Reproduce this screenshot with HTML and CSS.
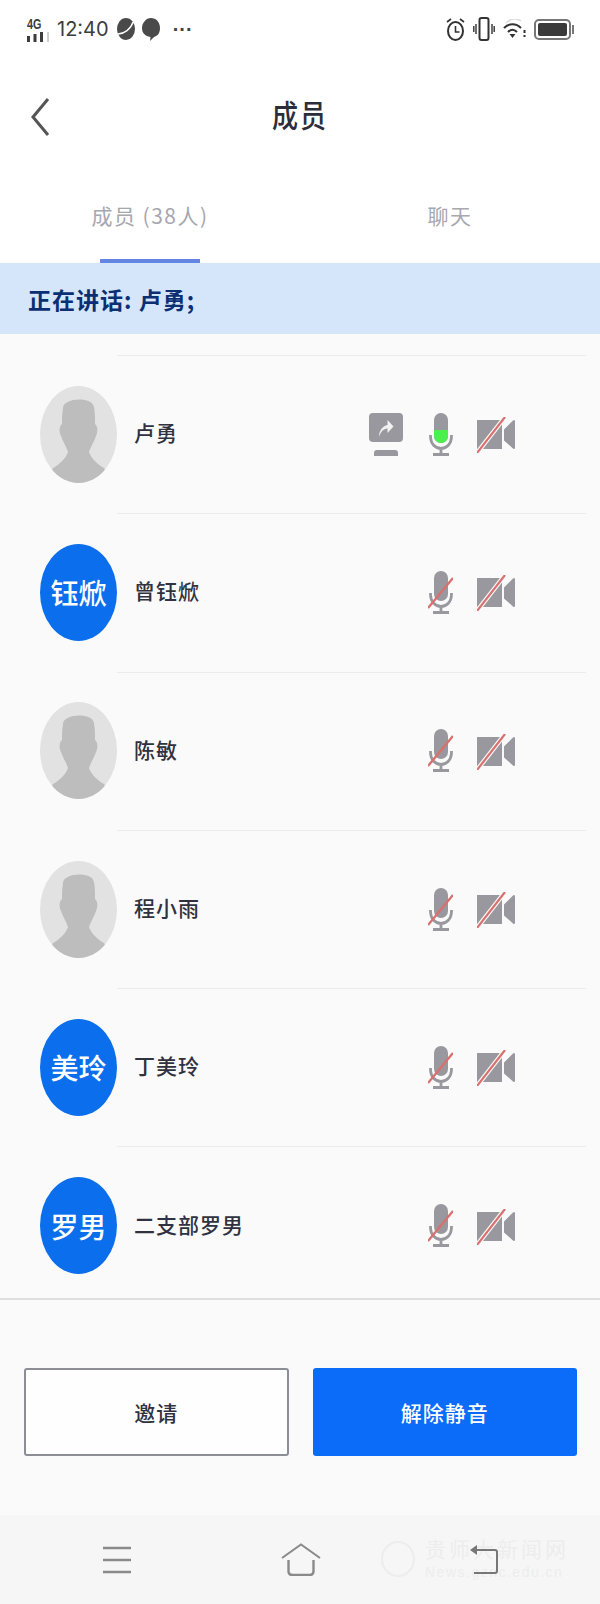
FILE: index.html
```html
<!DOCTYPE html>
<html lang="zh">
<head>
  <meta charset="UTF-8" />
  <meta name="viewport" content="width=device-width, initial-scale=1" />
  <title>成员</title>
  <link rel="stylesheet" href="styles.css">
</head>
<body>
  <svg class="defs" width="0" height="0">
    <symbol id="person" viewBox="0 0 77 97">
      <ellipse cx="38.500" cy="48.500" rx="38.500" ry="48.500" fill="#e2e2e2"/>
      <clipPath id="oval"><ellipse cx="38.500" cy="48.500" rx="38.500" ry="48.500"/></clipPath>
      <path clip-path="url(#oval)" fill="#bdbdbd" d="M23 22C23 12 52 10 54 21 55 27 55 32 55 38 58 40 58 46 56 50 54 56 51 60 49 66 51 72 57 78 64 82L71 97H6L13 82C20 78 26 72 28 66 26 60 23 56 21 50 19 46 19 40 22 38 22 32 22 28 23 22z"/>
    </symbol>
    <symbol id="mic" viewBox="0 0 24 43">
      <rect x="5" y="0" width="14" height="30" rx="7" fill="#98989e"/>
      <path d="M1.500 22v1c0 8 5 12.500 10.500 12.500s10.500-4.500 10.500-12.500v-1M12 36v5M4 41.500h16" fill="none" stroke="#98989e" stroke-width="2.800"/>
    </symbol>
    <symbol id="cam" viewBox="0 0 38 36">
      <path fill="#98989e" d="M0 3h25v29H0zM27 12.500 36 3.500c1-1 2-.5 2 1v26c0 1.500-1 2-2 1l-9-8z"/>
      <path d="M0 36 28 0" stroke="#fafafa" stroke-width="4.500"/>
      <path d="M0 36 28 0" stroke="#d9706e" stroke-width="2.200"/>
    </symbol>
    <symbol id="mic-muted" viewBox="-1 0 25 43">
      <use href="#mic" x="0" y="0" width="24" height="43"/>
      <path d="M-1 37 24 7" stroke="#d9706e" stroke-width="2.400"/>
    </symbol>
  </svg>

  <div class="status">
    <div class="status-left">
      <div class="signal">
        <span class="net">4G</span>
        <svg width="23" height="10" viewBox="0 0 23 10"><path fill="#3c3c3c" d="M0 4h3v6H0zM6.500 2h3v8h-3zM13 0h3v10h-3z"/><path fill="#d0d0d0" d="M20 0h2v10h-2z"/></svg>
      </div>
      <span class="time">12:40</span>
      <svg class="notify" width="18" height="22" viewBox="0 0 18 22"><ellipse cx="9" cy="11" rx="9" ry="11" fill="#4a4a4a"/><path d="M1 16C7 16 14 11 16 4" stroke="#fff" stroke-width="1.300" fill="none"/></svg>
      <svg width="18" height="23" viewBox="0 0 18 23"><path fill="#4a4a4a" d="M9 0C14 0 18 4 18 10s-3 8-6 9l-4 4 .5-4C3 18 0 15 0 10S4 0 9 0z"/></svg>
      <span class="dots">···</span>
    </div>
    <div class="status-right">
      <svg width="19" height="24" viewBox="0 0 19 24"><ellipse cx="9.500" cy="14" rx="7.500" ry="9" fill="none" stroke="#333" stroke-width="2"/><path d="M9.500 9v6h4M1 5l4-3M18 5l-4-3" fill="none" stroke="#333" stroke-width="1.600"/></svg>
      <svg width="22" height="24" viewBox="0 0 22 24"><rect x="6.500" y="1" width="9" height="22" rx="2" fill="none" stroke="#333" stroke-width="2"/><path d="M3 7v10M0.800 9v6M19 7v10M21.200 9v6" stroke="#333" stroke-width="1.400"/></svg>
      <svg width="23" height="20" viewBox="0 0 23 20"><path d="M1 9c5-5 12-5 17 0M5 13c3-3 6-3 9 0" fill="none" stroke="#333" stroke-width="2"/><path d="M9.500 19l-3-4h6z" fill="#333"/><path d="M21.500 11v3M21.500 16v2" stroke="#333" stroke-width="2"/><path d="M3 4c5-5 11-5 15-2" fill="none" stroke="#ddd" stroke-width="1.500"/></svg>
      <div class="battery"><div class="battery-fill"></div></div>
    </div>
  </div>

  <header class="nav">
    <svg class="back" width="20" height="40" viewBox="0 0 20 40"><path d="M18 2 3 20l15 18" fill="none" stroke="#555" stroke-width="3"/></svg>
    <h1 class="nav-title">成员</h1>
  </header>

  <div class="tabs">
    <div class="tab tab-active">成员 (38人)</div>
    <div class="tab">聊天</div>
  </div>

  <div class="speaking">正在讲话: 卢勇;</div>

  <main class="members">
    <div class="member">
      <svg class="avatar"><use href="#person"/></svg>
      <span class="name">卢勇</span>
      <div class="actions">
        <svg class="share" width="34" height="43" viewBox="0 0 34 43">
          <rect x="0" y="0" width="34" height="29" rx="4" fill="#98989e"/>
          <path fill="#98989e" d="M5 43v-3c0-2 1-3 3-3h18c2 0 3 1 3 3v3z"/>
          <path fill="#f2f2f2" d="M10 24c0-7 4-11 8.500-12V7l6 6.500-6 6.500v-4.500c-3 0-6.500 2-8.500 8.500z"/>
        </svg>
        <svg class="mic-on" width="24" height="43" viewBox="0 0 24 43">
          <use href="#mic" width="24" height="43"/>
          <path fill="#4cf04c" d="M5 17h14v6a7 7 0 0 1-14 0z"/>
        </svg>
        <svg class="cam" width="38" height="36"><use href="#cam"/></svg>
      </div>
    </div>
    <div class="member">
      <div class="avatar avatar-text">钰焮</div>
      <span class="name">曾钰焮</span>
      <div class="actions">
        <svg class="mic-off" width="25" height="43"><use href="#mic-muted"/></svg>
        <svg class="cam" width="38" height="36"><use href="#cam"/></svg>
      </div>
    </div>
    <div class="member">
      <svg class="avatar"><use href="#person"/></svg>
      <span class="name">陈敏</span>
      <div class="actions">
        <svg class="mic-off" width="25" height="43"><use href="#mic-muted"/></svg>
        <svg class="cam" width="38" height="36"><use href="#cam"/></svg>
      </div>
    </div>
    <div class="member">
      <svg class="avatar"><use href="#person"/></svg>
      <span class="name">程小雨</span>
      <div class="actions">
        <svg class="mic-off" width="25" height="43"><use href="#mic-muted"/></svg>
        <svg class="cam" width="38" height="36"><use href="#cam"/></svg>
      </div>
    </div>
    <div class="member">
      <div class="avatar avatar-text">美玲</div>
      <span class="name">丁美玲</span>
      <div class="actions">
        <svg class="mic-off" width="25" height="43"><use href="#mic-muted"/></svg>
        <svg class="cam" width="38" height="36"><use href="#cam"/></svg>
      </div>
    </div>
    <div class="member">
      <div class="avatar avatar-text">罗男</div>
      <span class="name">二支部罗男</span>
      <div class="actions">
        <svg class="mic-off" width="25" height="43"><use href="#mic-muted"/></svg>
        <svg class="cam" width="38" height="36"><use href="#cam"/></svg>
      </div>
    </div>
  </main>

  <div class="buttons">
    <button class="btn btn-invite">邀请</button>
    <button class="btn btn-unmute">解除静音</button>
  </div>

  <footer class="sysbar">
    <div class="watermark">
      <div class="wm-seal"></div>
      <div>
        <div class="wm-cn">贵师大新闻网</div>
        <div class="wm-en">News.gznc.edu.cn</div>
      </div>
    </div>
    <svg class="sys-icon" width="28" height="28" viewBox="0 0 28 28"><path d="M0 2h28M0 14h28M0 26h28" stroke="#8a8a8a" stroke-width="2.600"/></svg>
    <svg class="sys-icon" width="40" height="33" viewBox="0 0 40 33"><path d="M1 15 20 1.500 39 15" fill="none" stroke="#8a8a8a" stroke-width="2"/><path d="M7.500 17v11c0 3 2 4 4 4h17c2 0 4-1 4-4V17" fill="none" stroke="#8a8a8a" stroke-width="2.400"/></svg>
    <svg class="sys-icon" width="28" height="29" viewBox="0 0 28 29"><path d="M7 5h18c1 0 2 1 2 2v19c0 1-1 2-2 2H4" fill="none" stroke="#777" stroke-width="2"/><path d="M0 5l7-5v10z" fill="#777"/></svg>
  </footer>
</body>
</html>
```

FILE: styles.css
```css
* {
  box-sizing: border-box;
}
html, body {
  margin: 0;
  padding: 0;
}
body {
  width: 600px;
  height: 1604px;
  background: #fafafa;
  font-family: "Noto Sans CJK SC", "Liberation Sans", sans-serif;
  color: #30323f;
  overflow: hidden;
}
.defs {
  position: absolute;
}

/* status bar */
.status {
  height: 60px;
  padding: 15px 27px 0 27px;
  background: #fff;
  display: flex;
  justify-content: space-between;
  align-items: flex-start;
}
.status-left,
.status-right {
  display: flex;
  align-items: center;
  height: 28px;
}
.status-left {
  gap: 7px;
}
.status-right {
  gap: 8px;
}
.signal {
  width: 23px;
  display: flex;
  flex-direction: column;
  align-items: flex-start;
  gap: 1px;
}
.net {
  font-family: "Liberation Sans", sans-serif;
  font-size: 15px;
  line-height: 14px;
  font-weight: 700;
  color: #3c3c3c;
  transform: scaleX(.72);
  transform-origin: left;
}
.time {
  font-family: "Inter", sans-serif;
  font-size: 20px;
  color: #3c3c3c;
}
.notify {
  margin-left: 1px;
}
.dots {
  font-family: "Liberation Sans", sans-serif;
  font-size: 20px;
  font-weight: 700;
  color: #444;
  margin-left: 6px;
}
.battery {
  width: 37px;
  height: 21px;
  margin-right: 2px;
  border: 2px solid #777;
  border-radius: 5px;
  padding: 2px;
  background: #fff;
  position: relative;
}
.battery::after {
  content: "";
  position: absolute;
  right: -5px;
  top: 4px;
  width: 2px;
  height: 9px;
  background: #777;
}
.battery-fill {
  height: 100%;
  background: #3a3a3a;
  border-radius: 2px;
}

/* nav */
.nav {
  height: 115px;
  padding-bottom: 8px;
  background: #fff;
  display: flex;
  align-items: center;
  justify-content: center;
  position: relative;
}
.back {
  position: absolute;
  left: 30px;
  top: 37px;
}
.nav-title {
  margin: 0;
  font-size: 26px;
  font-weight: 500;
  letter-spacing: 2px;
  color: #2b2d3a;
  transform: scaleY(1.2);
}

/* tabs */
.tabs {
  height: 88px;
  background: #fff;
  display: flex;
}
.tab {
  width: 300px;
  display: flex;
  align-items: center;
  justify-content: center;
  font-size: 21px;
  letter-spacing: 1.500px;
  padding-bottom: 8px;
  color: #a6a7af;
  position: relative;
}
.tab-active::after {
  content: "";
  position: absolute;
  left: 100px;
  bottom: 0;
  width: 100px;
  height: 4px;
  background: #6486e3;
}

.speaking {
  height: 71px;
  padding-left: 28px;
  display: flex;
  align-items: center;
  background: #d5e6fb;
  color: #0b2f72;
  font-size: 23px;
  font-weight: 700;
  letter-spacing: 1px;
}

/* member list */
.members {
  height: 966px;
  padding-top: 21px;
  border-bottom: 2px solid #dedede;
  overflow: hidden;
}
.member {
  height: 158.300px;
  padding-left: 40px;
  display: flex;
  align-items: center;
  position: relative;
}
.member::before {
  content: "";
  position: absolute;
  top: 0;
  left: 117px;
  right: 14px;
  height: 1px;
  background: #ececec;
}
.avatar {
  width: 77px;
  height: 97px;
  flex: none;
}
.avatar-text {
  border-radius: 50%;
  background: #0b6eec;
  color: #fff;
  font-size: 28px;
  font-weight: 500;
  display: flex;
  align-items: center;
  justify-content: center;
  white-space: nowrap;
}
.name {
  margin-left: 17px;
  margin-bottom: 4px;
  font-size: 21px;
  font-weight: 500;
  letter-spacing: 1px;
  color: #30323f;
}
.actions {
  margin-left: auto;
  margin-right: 85px;
  display: flex;
  align-items: center;
  gap: 24px;
}
.actions svg {
  display: block;
}
.actions .cam {
  margin-top: 2px;
}
.share {
  margin-right: 2px;
}

/* buttons */
.buttons {
  height: 215px;
  padding: 68px 23px 0 24px;
  display: flex;
  gap: 24px;
  align-items: flex-start;
}
.btn {
  flex: none;
  width: 264.500px;
  height: 88px;
  border-radius: 3px;
  font-family: inherit;
  font-size: 21px;
  font-weight: 500;
  letter-spacing: 1px;
}
.btn-invite {
  background: #fefefe;
  border: 2px solid #8d8d95;
  color: #30323f;
}
.btn-unmute {
  background: #0a6cf8;
  border: none;
  color: #fff;
}

/* system nav */
.sysbar {
  height: 89px;
  background: #f6f6f6;
  display: flex;
  align-items: center;
  position: relative;
  padding: 0 102px 0 103px;
  justify-content: space-between;
}
.sys-icon {
  position: relative;
}
.watermark {
  position: absolute;
  left: 381px;
  top: 22px;
  display: flex;
  align-items: center;
  gap: 10px;
  color: #ededed;
}
.wm-seal {
  width: 34px;
  height: 36px;
  border: 2px solid #ededed;
  border-radius: 50%;
}
.wm-cn {
  font-size: 21px;
  line-height: 22px;
  letter-spacing: 3px;
}
.wm-en {
  font-family: "Liberation Sans", sans-serif;
  font-size: 14px;
  line-height: 16px;
  letter-spacing: 1.500px;
  margin-top: 5px;
}
```
